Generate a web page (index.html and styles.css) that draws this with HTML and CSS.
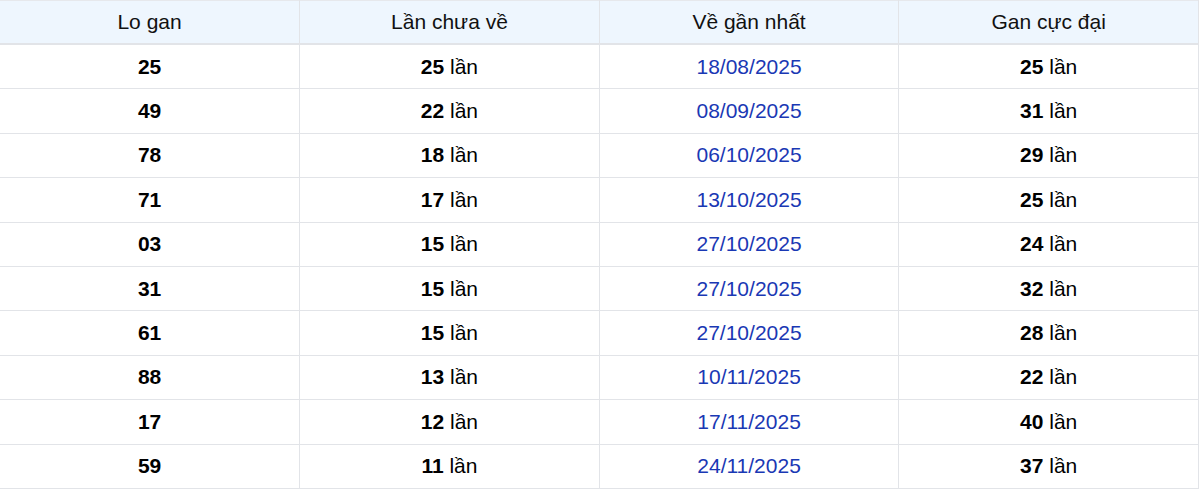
FILE: index.html
```html
<!DOCTYPE html>
<html lang="vi">
<head>
<meta charset="utf-8">
<link rel="stylesheet" href="styles.css">
</head>
<body>
<table class="gan-table">
  <thead>
    <tr><th>Lo gan</th><th>Lần chưa về</th><th>Về gần nhất</th><th>Gan cực đại</th></tr>
  </thead>
  <tbody>
    <tr><td><b>25</b></td><td><b>25</b> lần</td><td class="date">18/08/2025</td><td><b>25</b> lần</td></tr>
    <tr><td><b>49</b></td><td><b>22</b> lần</td><td class="date">08/09/2025</td><td><b>31</b> lần</td></tr>
    <tr><td><b>78</b></td><td><b>18</b> lần</td><td class="date">06/10/2025</td><td><b>29</b> lần</td></tr>
    <tr><td><b>71</b></td><td><b>17</b> lần</td><td class="date">13/10/2025</td><td><b>25</b> lần</td></tr>
    <tr><td><b>03</b></td><td><b>15</b> lần</td><td class="date">27/10/2025</td><td><b>24</b> lần</td></tr>
    <tr><td><b>31</b></td><td><b>15</b> lần</td><td class="date">27/10/2025</td><td><b>32</b> lần</td></tr>
    <tr><td><b>61</b></td><td><b>15</b> lần</td><td class="date">27/10/2025</td><td><b>28</b> lần</td></tr>
    <tr><td><b>88</b></td><td><b>13</b> lần</td><td class="date">10/11/2025</td><td><b>22</b> lần</td></tr>
    <tr><td><b>17</b></td><td><b>12</b> lần</td><td class="date">17/11/2025</td><td><b>40</b> lần</td></tr>
    <tr><td><b>59</b></td><td><b>11</b> lần</td><td class="date">24/11/2025</td><td><b>37</b> lần</td></tr>
  </tbody>
</table>
</body>
</html>
```
FILE: styles.css
```css
html, body {
  margin: 0;
  padding: 0;
  background: #fff;
}
.gan-table {
  width: 1199px;
  border-collapse: collapse;
  table-layout: fixed;
  font-family: "Liberation Sans", Arial, sans-serif;
  font-size: 21px;
  color: #000;
}
.gan-table th,
.gan-table td {
  border: 1px solid #e2e4e8;
  text-align: center;
  padding: 0;
  line-height: 24px;
}
.gan-table th:first-child,
.gan-table td:first-child {
  border-left: none;
}
.gan-table th {
  background: #eef6fe;
  font-weight: normal;
  color: #111;
  height: 42px;
  border-top: 1px solid #e6e8ec;
  border-bottom: 2px solid #e2e4e8;
}
.gan-table td {
  height: 43.4px;
}
.gan-table b {
  font-weight: bold;
}
.gan-table .date {
  color: #1a38b4;
}
```
